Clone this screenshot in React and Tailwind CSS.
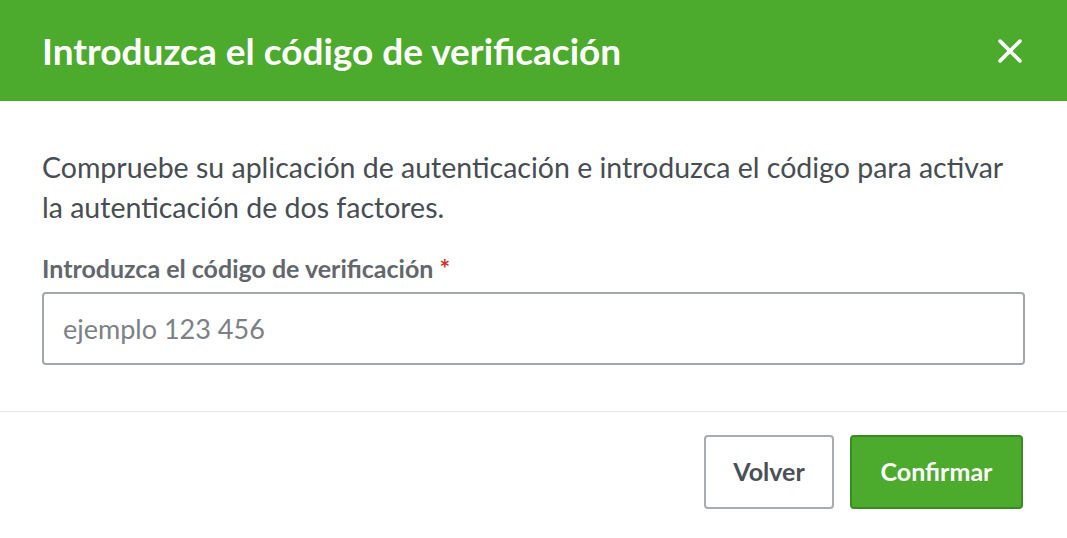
import React, { useState } from "react";

const App = () => {
  const [code, setCode] = useState("");

  return (
    <div
      className="w-[1067px] h-[538px] bg-white flex flex-col overflow-hidden"
      style={{ fontFamily: "Lato, 'Noto Sans', sans-serif" }}
    >
      {/* Header */}
      <div className="h-[101px] bg-[#4caa2c] flex items-center justify-between pl-[42px] pr-[40px]">
        <h1 className="text-[37px] font-bold text-white leading-none">
          Introduzca el código de verificación
        </h1>
        <button className="text-white" aria-label="Cerrar">
          <svg className="w-[34px] h-[34px]" viewBox="0 0 24 24" fill="none" stroke="currentColor" strokeWidth={2.6} strokeLinecap="round">
            <path d="M5 5l14 14M19 5L5 19" />
          </svg>
        </button>
      </div>

      {/* Body */}
      <div className="px-[42px] pt-[46px] pb-[46px] border-b border-[#e9eaeb]">
        <p className="text-[28.5px] leading-[40px] text-[#474d53]">
          Compruebe su aplicación de autenticación e introduzca el código para activar la autenticación de dos factores.
        </p>
        <label className="block mt-[26px] text-[25px] font-bold text-[#62676c] leading-[30px]">
          Introduzca el código de verificación <span className="text-[#d0312d]">*</span>
        </label>
        <input
          value={code}
          onChange={(e) => setCode(e.target.value)}
          placeholder="ejemplo 123 456"
          className="mt-[9px] w-full h-[73px] border-2 border-[#a3a7ab] rounded-[4px] px-[19px] text-[27px] text-[#474d53] placeholder:text-[#7c8186] outline-none"
        />
      </div>

      {/* Footer */}
      <div className="flex justify-end gap-[16px] px-[44px] pt-[23px]">
        <button className="w-[130px] h-[74px] border-2 border-[#a9adb1] rounded-[4px] bg-white text-[25px] font-bold text-[#4a5056]">
          Volver
        </button>
        <button className="w-[173px] h-[74px] border-2 border-[#3b8a22] rounded-[4px] bg-[#4caa2c] text-[25px] font-bold text-white">
          Confirmar
        </button>
      </div>
    </div>
  );
};

export default App;
